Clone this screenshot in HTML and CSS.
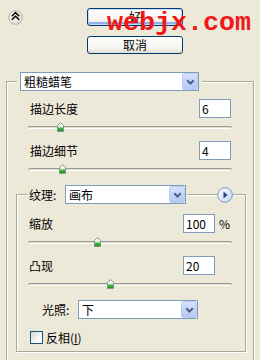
FILE: index.html
```html
<!DOCTYPE html>
<html lang="zh">
<head>
    <meta charset="UTF-8">
    <title>粗糙蜡笔</title>
    <link rel="stylesheet" href="styles.css">
</head>
<body>
    <!-- Top bar: collapse button + OK / Cancel -->
    <div class="top">
        <button class="round-btn">
            <svg width="15" height="15" viewBox="0 0 15 15">
                <defs>
                    <radialGradient id="rb" cx="40%" cy="35%" r="70%">
                        <stop offset="0" stop-color="#ffffff"/>
                        <stop offset="1" stop-color="#dcd9cd"/>
                    </radialGradient>
                </defs>
                <circle cx="7.5" cy="7.5" r="6.8" fill="url(#rb)" stroke="#b3b0a2"/>
                <path d="M3.8 6.2 L7.5 2.6 L11.2 6.2 M3.8 9.8 L7.5 6.2 L11.2 9.8" fill="none" stroke="#000" stroke-width="1.5"/>
            </svg>
        </button>
        <div class="top-buttons">
            <button class="btn btn-default">好</button>
            <button class="btn">取消</button>
        </div>
    </div>

    <div class="watermark">webjx.com</div>

    <!-- Brush settings -->
    <fieldset class="group outer">
        <legend>
            <div class="combo combo-brush">
                <span class="combo-text">粗糙蜡笔</span>
                <span class="combo-arrow"><svg width="9" height="6" viewBox="0 0 9 6"><path d="M1.2 1.2 L4.5 4.5 L7.8 1.2" fill="none" stroke="#4d6185" stroke-width="2"/></svg></span>
            </div>
        </legend>

        <div class="row row-first">
            <span class="label">描边长度</span>
            <span class="field">6</span>
        </div>
        <div class="slider">
            <div class="track"></div>
            <svg class="thumb" style="left:29px" width="7" height="10" viewBox="0 0 7 10"><use href="#thumb-shape"/></svg>
        </div>

        <div class="row">
            <span class="label">描边细节</span>
            <span class="field">4</span>
        </div>
        <div class="slider">
            <div class="track"></div>
            <svg class="thumb" style="left:31px" width="7" height="10" viewBox="0 0 7 10"><use href="#thumb-shape"/></svg>
        </div>

        <!-- Texture settings -->
        <fieldset class="group inner">
            <legend>
                <span class="legend-label">纹理:</span>
                <div class="combo combo-texture">
                    <span class="combo-text">画布</span>
                    <span class="combo-arrow"><svg width="9" height="6" viewBox="0 0 9 6"><path d="M1.2 1.2 L4.5 4.5 L7.8 1.2" fill="none" stroke="#4d6185" stroke-width="2"/></svg></span>
                </div>
                <span class="legend-line"></span>
                <button class="play-btn">
                    <svg width="16" height="16" viewBox="0 0 16 16">
                        <defs>
                            <linearGradient id="pb" x1="0" y1="0" x2="1" y2="1">
                                <stop offset="0" stop-color="#ffffff"/>
                                <stop offset="1" stop-color="#c3d2f0"/>
                            </linearGradient>
                        </defs>
                        <circle cx="8" cy="8" r="7.3" fill="url(#pb)" stroke="#7f9ad0"/>
                        <path d="M6.5 4.5 L10.5 8 L6.5 11.5 Z" fill="#1d3f94"/>
                    </svg>
                </button>
            </legend>

            <div class="row row-first">
                <span class="label">缩放</span>
                <span class="field">100</span>
                <span class="unit">%</span>
            </div>
            <div class="slider">
                <div class="track"></div>
                <svg class="thumb" style="left:66px" width="7" height="10" viewBox="0 0 7 10"><use href="#thumb-shape"/></svg>
            </div>

            <div class="row">
                <span class="label">凸现</span>
                <span class="field">20</span>
                <span class="unit"></span>
            </div>
            <div class="slider">
                <div class="track"></div>
                <svg class="thumb" style="left:79px" width="7" height="10" viewBox="0 0 7 10"><use href="#thumb-shape"/></svg>
            </div>

            <div class="row light-row">
                <span class="light-label">光照:</span>
                <div class="combo combo-light">
                    <span class="combo-text">下</span>
                    <span class="combo-arrow"><svg width="9" height="6" viewBox="0 0 9 6"><path d="M1.2 1.2 L4.5 4.5 L7.8 1.2" fill="none" stroke="#4d6185" stroke-width="2"/></svg></span>
                </div>
            </div>

            <div class="check-row">
                <span class="checkbox"></span>
                <span>反相(<u>I</u>)</span>
            </div>
        </fieldset>
    </fieldset>

    <!-- shared slider thumb -->
    <svg class="defs" width="0" height="0">
        <defs>
            <linearGradient id="tg" x1="0" y1="0" x2="0" y2="1">
                <stop offset="0" stop-color="#ffffff"/>
                <stop offset="0.55" stop-color="#e8e8e0"/>
                <stop offset="0.56" stop-color="#4cc24c"/>
                <stop offset="1" stop-color="#1a8a1a"/>
            </linearGradient>
            <path id="thumb-shape" d="M0.5 9.5 V3.5 L3.5 0.5 L6.5 3.5 V9.5 Z" fill="url(#tg)" stroke="#7f9a80"/>
        </defs>
    </svg>
</body>
</html>
```

FILE: styles.css
```css
* {
    box-sizing: border-box;
}
body {
    margin: 0;
    width: 260px;
    height: 360px;
    overflow: hidden;
    position: relative;
    background: #ECE9D8;
    font-family: "Noto Sans CJK SC", sans-serif;
    font-size: 12px;
    color: #000;
}
.top {
    display: flex;
    height: 72px;
}
.round-btn {
    margin: 10px 0 0 8px;
    width: 15px;
    height: 15px;
    padding: 0;
    border: none;
    background: none;
}
.round-btn svg {
    display: block;
}
.top-buttons {
    margin: 8px 0 0 64px;
    display: flex;
    flex-direction: column;
    gap: 10px;
}
.btn {
    width: 96px;
    height: 18px;
    padding: 0;
    border: 1px solid #003C74;
    border-radius: 3px;
    background: linear-gradient(#ffffff, #f5f4ef 70%, #e0ddd2);
    font: 12px/16px "Noto Sans CJK SC", sans-serif;
    color: #000;
}
.btn-default {
    box-shadow: inset 0 0 0 1px #c6d8f6, inset 0 -2px 0 1px #8fb0ea;
}
.watermark {
    position: absolute;
    left: 107px;
    top: 12px;
    font: bold 26.7px/22px "Liberation Mono", monospace;
    color: #f01818;
    pointer-events: none;
}

/* group boxes */
.group {
    padding: 0;
    min-width: 0;
    border: 1px solid #ACA899;
    box-shadow: inset 1px 1px 0 #fff, 1px 1px 0 #fff;
}
.outer {
    margin: 0 0 0 6px;
    width: 248px;
    padding-bottom: 30px;
}
.outer > legend {
    margin-left: 10px;
    padding: 0 3px;
    background: #ECE9D8;
}
.inner {
    margin: 11px 0 0 9px;
    width: 230px;
    padding-bottom: 7px;
}
.inner > legend {
    margin-left: 10px;
    padding: 0 0 0 2px;
    display: flex;
    align-items: center;
    background: #ECE9D8;
}
.legend-label {
    width: 36px;
}
.legend-line {
    width: 30px;
    margin-left: 1px;
    height: 2px;
    border-top: 1px solid #ACA899;
    border-bottom: 1px solid #fff;
}
.play-btn {
    width: 16px;
    height: 16px;
    padding: 0;
    border: none;
    background: none;
}
.play-btn svg {
    display: block;
}

/* combo boxes */
.combo {
    display: flex;
    align-items: center;
    height: 19px;
    border: 1px solid #7F9DB9;
    background: #fff;
}
.combo-brush {
    width: 179px;
}
.combo-texture {
    width: 121px;
}
.combo-light {
    width: 120px;
}
.combo-text {
    flex: 1;
    padding-left: 3px;
    line-height: 17px;
}
.combo-arrow {
    width: 16px;
    height: 17px;
    display: flex;
    align-items: center;
    justify-content: center;
    border: 1px solid #bccdf5;
    border-radius: 2px;
    background: linear-gradient(#d6e2fd, #b3c7f6);
}
.combo-arrow svg {
    display: block;
}

/* label + value rows */
.row {
    display: flex;
    align-items: center;
    height: 19px;
    margin-top: 9px;
}
.outer > .row {
    padding: 0 22px 0 23px;
}
.outer > .row-first {
    margin-top: 8px;
}
.inner > .row {
    padding-left: 12px;
}
.inner > .row-first {
    margin-top: 10px;
}
.label {
    flex: 1;
    line-height: 14px;
}
.field {
    width: 32px;
    height: 19px;
    padding-left: 2px;
    border: 1px solid #7F9DB9;
    background: #fff;
    line-height: 17px;
}
.unit {
    width: 30px;
    padding-left: 4px;
}
.inner > .light-row {
    margin-top: 11px;
    padding-left: 25px;
}
.light-label {
    width: 36px;
}
.check-row {
    display: flex;
    align-items: center;
    height: 13px;
    margin-top: 12px;
    padding-left: 13px;
}
.checkbox {
    width: 13px;
    height: 13px;
    margin-right: 3px;
    border: 1px solid #1C5180;
    background: linear-gradient(135deg, #d8d8d0, #ffffff 80%);
}

/* sliders */
.slider {
    position: relative;
    width: 204px;
    height: 10px;
    margin: 4px 0 0 21px;
}
.inner > .slider {
    margin-left: 11px;
}
.track {
    position: absolute;
    left: 0;
    right: 0;
    top: 4px;
    height: 3px;
    border-top: 1px solid #9a9a93;
    border-bottom: 1px solid #fff;
    border-left: 1px solid #b5b3a8;
    border-right: 1px solid #b5b3a8;
    border-radius: 2px;
    background: #dedbd0;
}
.thumb {
    position: absolute;
    top: 0;
}
.defs {
    position: absolute;
}
```
